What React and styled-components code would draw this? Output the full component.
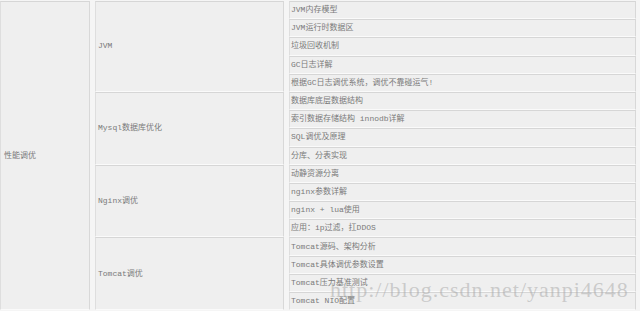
import React from 'react';
import styled, { createGlobalStyle } from 'styled-components';

const GlobalStyle = createGlobalStyle`
  body {
    margin: 0;
    background: #f3f3f3;
  }
`;

const Page = styled.div`
  position: relative;
  width: 640px;
  height: 311px;
  overflow: hidden;
  background: #f5f5f5;
`;

const Table = styled.table`
  table-layout: fixed;
  border-collapse: separate;
  border-spacing: 5px 0;
  margin-left: -5px;
  margin-top: 1px;
  width: 646px;
  font-family: 'Liberation Mono', 'Noto Sans CJK SC', monospace;
  font-size: 8px;
  color: #7a7a7a;
`;

const Row = styled.tr`
  height: 18.2px;
`;

const Cell = styled.td`
  background: #efefef;
  border-top: 1px solid #d6d6d6;
  border-bottom: 1px solid #fafafa;
  border-left: 1px solid #dedede;
  border-right: 1px solid #d8d8d8;
  padding: 0 0 0 ${props => props.pad}px;
  vertical-align: middle;
  white-space: nowrap;
  line-height: 10px;
`;

const Watermark = styled.div`
  position: absolute;
  left: 330px;
  top: 279px;
  font-family: 'Liberation Serif', serif;
  font-size: 22px;
  line-height: 22px;
  letter-spacing: 1px;
  color: rgba(165, 165, 165, 0.5);
  white-space: nowrap;
  pointer-events: none;
`;

const groups = [
  {
    name: 'JVM',
    items: [
      'JVM内存模型',
      'JVM运行时数据区',
      '垃圾回收机制',
      'GC日志详解',
      '根据GC日志调优系统，调优不靠碰运气!',
    ],
  },
  {
    name: 'Mysql数据库优化',
    items: ['数据库底层数据结构', '索引数据存储结构 innodb详解', 'SQL调优及原理', '分库、分表实现'],
  },
  {
    name: 'Nginx调优',
    items: ['动静资源分离', 'nginx参数详解', 'nginx + lua使用', '应用：ip过滤，扛DDOS'],
  },
  {
    name: 'Tomcat调优',
    items: ['Tomcat源码、架构分析', 'Tomcat具体调优参数设置', 'Tomcat压力基准测试', 'Tomcat NIO配置'],
  },
];

const total = groups.reduce((n, g) => n + g.items.length, 0);

export default function App() {
  return (
    <Page>
      <GlobalStyle />
      <Table>
        <colgroup>
          <col style={{ width: 90 }} />
          <col style={{ width: 189 }} />
          <col style={{ width: 347 }} />
        </colgroup>
        <tbody>
          {groups.map((group, gi) =>
            group.items.map((item, i) => (
              <Row key={item}>
                {gi === 0 && i === 0 && (
                  <Cell rowSpan={total} pad={3}>
                    性能调优
                  </Cell>
                )}
                {i === 0 && (
                  <Cell rowSpan={group.items.length} pad={2}>
                    {group.name}
                  </Cell>
                )}
                <Cell pad={1}>{item}</Cell>
              </Row>
            ))
          )}
        </tbody>
      </Table>
      <Watermark>http://blog.csdn.net/yanpi4648</Watermark>
    </Page>
  );
}
